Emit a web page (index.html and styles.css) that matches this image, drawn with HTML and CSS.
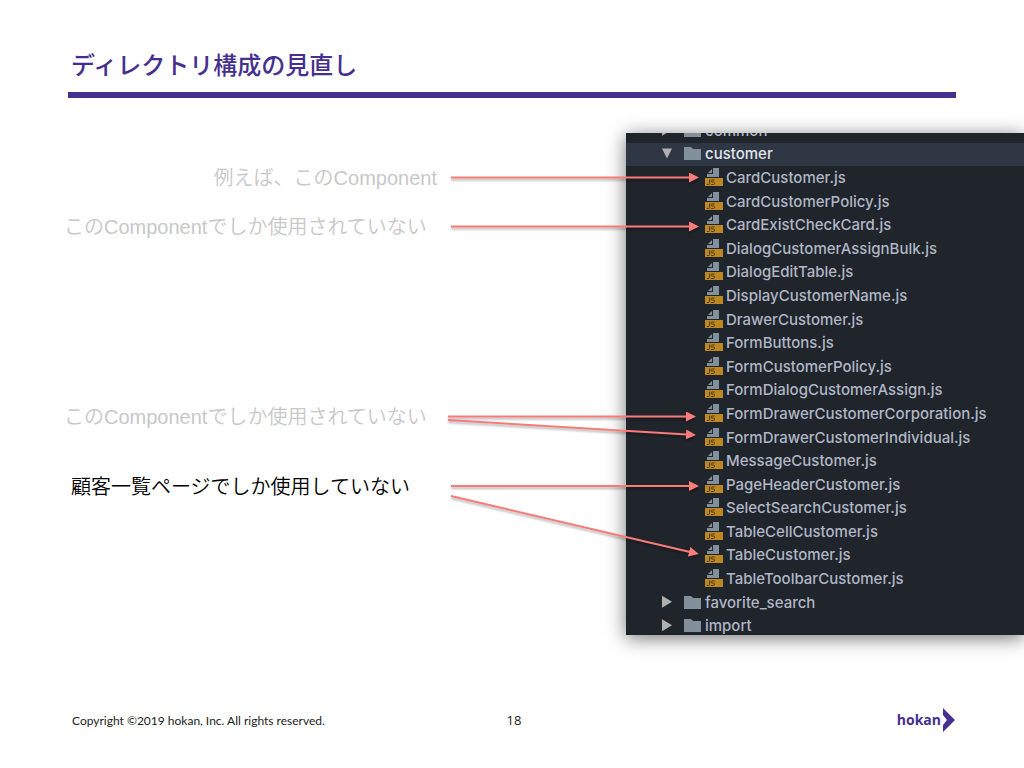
FILE: index.html
```
<!doctype html>
<html lang="ja">
    <head>
        <meta charset="utf-8">
        <title>ディレクトリ構成の見直し</title>
        <link rel="stylesheet" href="styles.css">
    </head>
    <body>
        <!-- shared icons -->
        <svg class="defs" width="0" height="0" aria-hidden="true">
            <symbol id="folder" viewBox="0 0 17 14">
                <path d="M0 1h7l2 2h8v11H0z" fill="#82909c"/>
            </symbol>
            <symbol id="js" viewBox="0 0 18 18">
                <path d="M7 1v4H3zM8 0h6v9H2V6h6z" fill="#82909c"/>
                <path d="M0 10h18v8H0z" fill="#bd8721"/>
                <path d="M4.500 11.500v4q0 1-1 1H2M9.500 12H7q-1 0-1 1t1 1h1.500q1 0 1 1.200t-1 1.300H6" fill="none" stroke="#4f3a16" stroke-width="1"/>
            </symbol>
        </svg>
        <header class="header">
            <h1>ディレクトリ構成の見直し</h1>
        </header>
        <main class="main">
            <div class="notes">
                <p class="first">例えば、このComponent</p>
                <p class="second">このComponentでしか使用されていない</p>
                <p class="third">このComponentでしか使用されていない</p>
                <p class="current">顧客一覧ページでしか使用していない</p>
            </div>
            <div class="panel">
                <ul class="tree">
                    <li class="dir"><span class="arrow"></span><svg class="folder"><use href="#folder"/></svg>common</li>
                    <li class="dir open"><span class="arrow"></span><svg class="folder"><use href="#folder"/></svg>customer</li>
                    <li class="file"><svg class="js"><use href="#js"/></svg>CardCustomer.js</li>
                    <li class="file"><svg class="js"><use href="#js"/></svg>CardCustomerPolicy.js</li>
                    <li class="file"><svg class="js"><use href="#js"/></svg>CardExistCheckCard.js</li>
                    <li class="file"><svg class="js"><use href="#js"/></svg>DialogCustomerAssignBulk.js</li>
                    <li class="file"><svg class="js"><use href="#js"/></svg>DialogEditTable.js</li>
                    <li class="file"><svg class="js"><use href="#js"/></svg>DisplayCustomerName.js</li>
                    <li class="file"><svg class="js"><use href="#js"/></svg>DrawerCustomer.js</li>
                    <li class="file"><svg class="js"><use href="#js"/></svg>FormButtons.js</li>
                    <li class="file"><svg class="js"><use href="#js"/></svg>FormCustomerPolicy.js</li>
                    <li class="file"><svg class="js"><use href="#js"/></svg>FormDialogCustomerAssign.js</li>
                    <li class="file"><svg class="js"><use href="#js"/></svg>FormDrawerCustomerCorporation.js</li>
                    <li class="file"><svg class="js"><use href="#js"/></svg>FormDrawerCustomerIndividual.js</li>
                    <li class="file"><svg class="js"><use href="#js"/></svg>MessageCustomer.js</li>
                    <li class="file"><svg class="js"><use href="#js"/></svg>PageHeaderCustomer.js</li>
                    <li class="file"><svg class="js"><use href="#js"/></svg>SelectSearchCustomer.js</li>
                    <li class="file"><svg class="js"><use href="#js"/></svg>TableCellCustomer.js</li>
                    <li class="file"><svg class="js"><use href="#js"/></svg>TableCustomer.js</li>
                    <li class="file"><svg class="js"><use href="#js"/></svg>TableToolbarCustomer.js</li>
                    <li class="dir"><span class="arrow"></span><svg class="folder"><use href="#folder"/></svg>favorite_search</li>
                    <li class="dir"><span class="arrow"></span><svg class="folder"><use href="#folder"/></svg>import</li>
                </ul>
            </div>
            <!-- arrows from the notes to the files -->
            <svg class="lines" width="720" height="502" aria-hidden="true">
                <defs>
                    <marker id="head" markerUnits="userSpaceOnUse" markerWidth="10" markerHeight="10" refX="1" refY="5" orient="auto">
                        <path d="M0 0l10 5-10 5z" fill="#ff7c78"/>
                    </marker>
                </defs>
                <path d="M451 44.500H690"/>
                <path d="M451 93.500H690"/>
                <path d="M448 283.500H687"/>
                <path d="M448 287L687 301.500"/>
                <path d="M451 353H690"/>
                <path d="M451 363L690 419"/>
            </svg>
        </main>
        <footer class="footer">
            <small>Copyright ©2019 hokan, Inc. All rights reserved.</small>
            <span class="page">18</span>
            <span class="logo">hokan<svg width="13" height="24" viewBox="0 0 13 24" aria-hidden="true"><path d="M0 0l12 12L0 24v-7l4-5-4-5z" fill="#45308f"/></svg></span>
        </footer>
    </body>
</html>
```
FILE: styles.css
```
*{box-sizing:border-box;}
body{margin:0;background:#fff;color:#000;font-family:"Liberation Sans","Noto Sans CJK JP",sans-serif;overflow-x:hidden;}
.defs{position:absolute;}

.header{margin:0 68px;padding:46px 3px 10px;border-bottom:6px solid #45308f;}
.header h1{margin:0;font:500 24px/36px "Noto Sans CJK JP",sans-serif;color:#45308f;}

.main{position:relative;display:flex;margin-top:35px;}
.notes{flex:none;width:626px;padding:33px 189px 0 64px;font-size:20px;line-height:24px;font-weight:350;color:#c8c8c8;white-space:nowrap;}
.notes p{margin:0;}
.notes .first{text-align:right;}
.notes .second{margin-top:25px;}
.notes .third{margin-top:166px;}
.notes .current{margin-top:46px;padding-left:7px;color:#000;}

.panel{flex:1;height:502px;overflow:hidden;background:#20242b;box-shadow:0 3px 18px rgba(0,0,0,.55);}
.tree{display:flex;flex-direction:column;height:519px;margin:-14px 0 0;padding:0;list-style:none;font:500 15px/22px Inter,sans-serif;color:#b0b7c6;}
.tree li{flex:1;display:flex;align-items:center;white-space:nowrap;}
.tree .dir{padding-left:36px;}
.tree .file{padding-left:79px;}
.tree .open{background:#2f3644;color:#e0e4ec;}
.tree svg,.arrow{margin-bottom:2px;}
.arrow{width:10px;height:12px;margin-right:12px;background:#b0b0b0;clip-path:polygon(0 0,100% 50%,0 100%);}
.open .arrow{height:10px;clip-path:polygon(0 0,100% 0,50% 100%);}
.folder{width:17px;height:14px;margin-right:4px;}
.js{width:18px;height:18px;margin-right:3px;}

.lines{position:absolute;left:0;top:0;fill:none;stroke:#f97b78;stroke-width:2;filter:drop-shadow(0 2px 1px rgba(0,0,0,.3));}
.lines path{marker-end:url(#head);}
.lines marker path{stroke:none;marker-end:none;}

.footer{display:grid;grid-template-columns:1fr auto 1fr;align-items:center;margin:72px 68px 20px;padding:0 0 0 4px;font:12px/24px "Open Sans",sans-serif;color:#222;}
.footer small{padding-top:2px;font:12px/24px Lato,sans-serif;}
.page{font-size:13px;}
.logo{display:flex;justify-content:flex-end;align-items:center;gap:2px;font:700 14px/24px "Open Sans",sans-serif;color:#45308f;}
```
